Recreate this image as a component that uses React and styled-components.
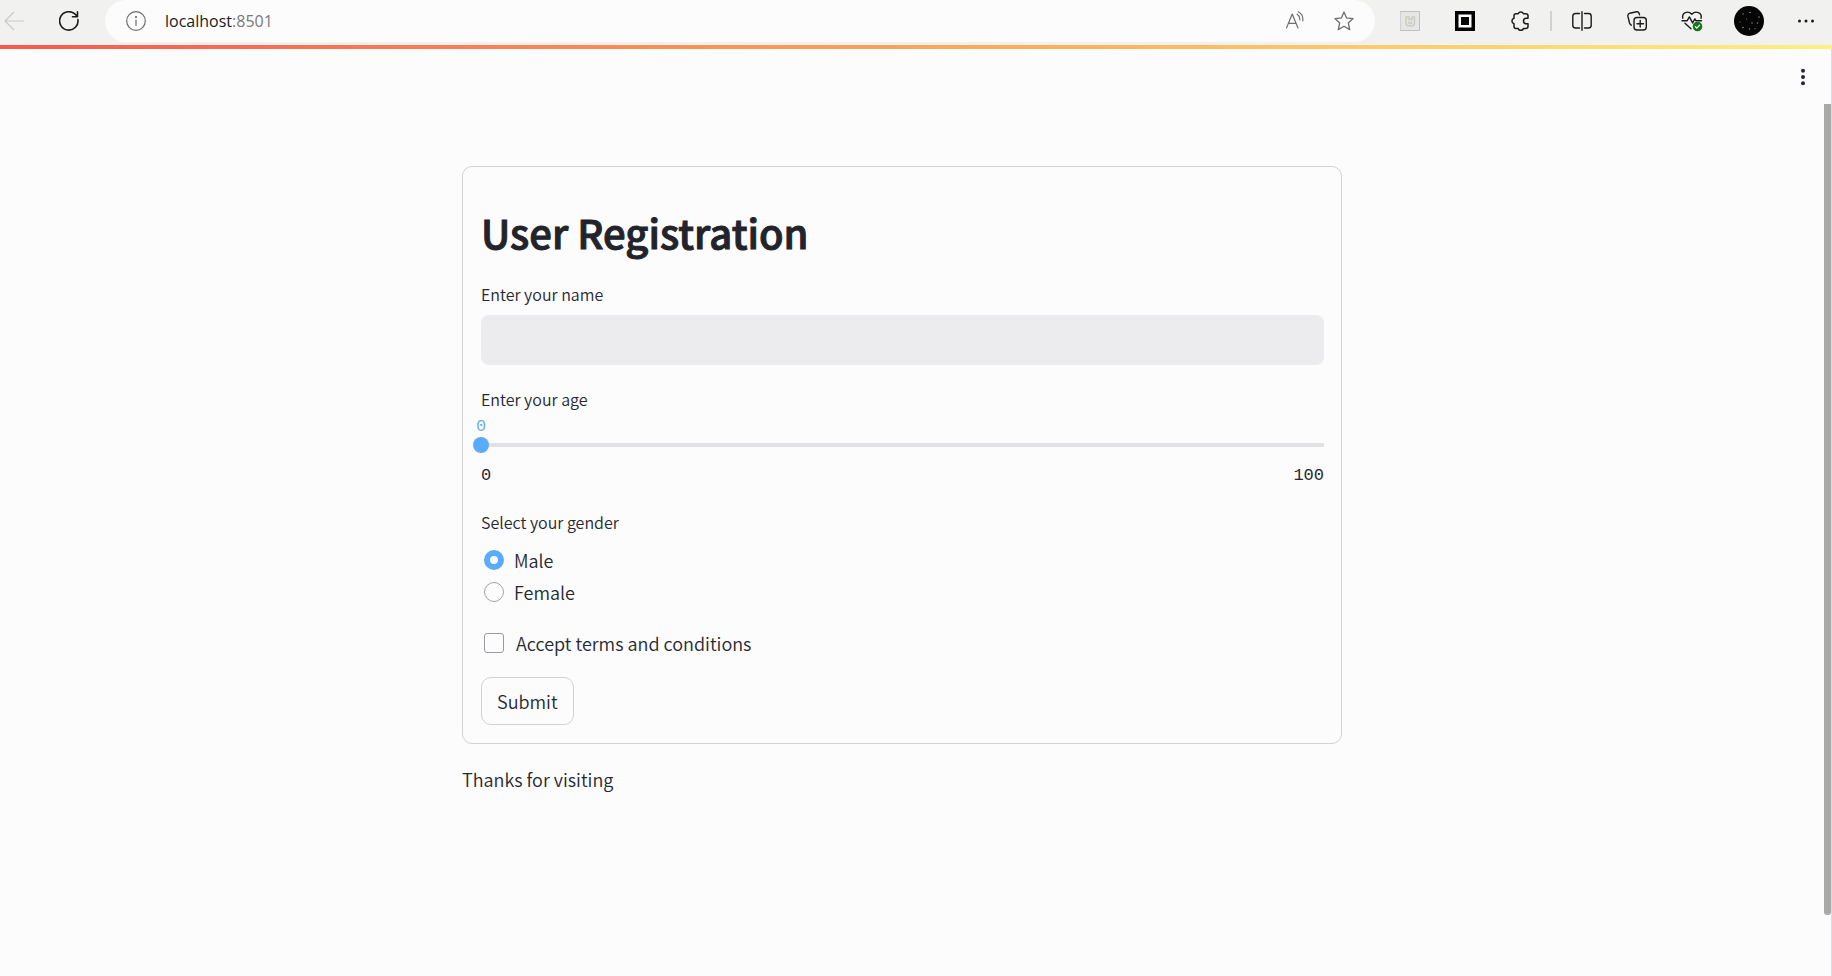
import React, { useState } from "react";
import styled, { createGlobalStyle } from "styled-components";

const sans = `"Noto Sans CJK SC", "Noto Sans", sans-serif`;
const mono = `"Liberation Mono", monospace`;
const ink = "#262730";
const accent = "#5aabfb";

const GlobalStyle = createGlobalStyle`
  *, *::before, *::after { box-sizing: border-box; }
  body { margin: 0; background: #fcfcfd; color: ${ink}; font-family: ${sans}; font-size: 18px; font-weight: 350; }
  button, input { font: inherit; color: inherit; }
`;

const Page = styled.div`
  display: flex;
  flex-direction: column;
  min-height: 100vh;
`;

const Toolbar = styled.header`
  display: flex;
  align-items: flex-start;
  height: 45px;
  padding-right: 10px;
  background: #f1f1f0;
  color: #1b1b1b;
`;

const IconButton = styled.button`
  display: flex;
  align-items: center;
  justify-content: center;
  flex: none;
  width: ${(p) => p.$width || 32}px;
  height: 42px;
  padding: 0;
  border: 0;
  background: none;
  color: ${(p) => p.$color || "inherit"};
`;

const NavGroup = styled.nav`
  display: flex;
  gap: 25px;
  padding-right: 20px;
`;

const AddressBar = styled.div`
  display: flex;
  flex: 1;
  align-items: center;
  height: 42px;
  padding: 0 15px;
  border-radius: 21px;
  background: #fcfcfd;
`;

const Address = styled.button`
  flex: 1;
  padding: 0 13px;
  border: 0;
  background: none;
  text-align: left;
  font-family: "Open Sans", "Noto Sans", sans-serif;
  font-size: 16px;
  font-weight: 400;
  line-height: 24px;
  color: #1b1b1b;
`;

const Port = styled.span`
  color: #7a7a7a;
`;

const AddressActions = styled.div`
  display: flex;
  gap: 17px;
`;

const ToolGroup = styled.div`
  display: flex;
  gap: ${(p) => p.$gap || 23}px;
  padding-left: ${(p) => p.$inset || 0}px;
`;

const Divider = styled.span`
  width: 2px;
  height: 20px;
  margin: 11px 14px 0;
  background: #d2d2d2;
`;

const LoadingBar = styled.div`
  height: 4px;
  background: linear-gradient(90deg, rgb(248, 88, 80), rgb(252, 180, 92) 60%, rgb(252, 240, 130));
`;

const Viewport = styled.div`
  display: flex;
  flex: 1;
`;

const Main = styled.main`
  flex: 1;
`;

const AppHeader = styled.div`
  display: flex;
  justify-content: flex-end;
  padding: 7px 5px 0 0;
`;

const ScrollRail = styled.div`
  display: flex;
  width: 8px;
  padding: 55px 0 61px;
  border-right: 1px solid #d9d9f2;
`;

const ScrollThumb = styled.div`
  flex: 1;
  border-radius: 0 0 3px 3px;
  background: #a9a9a6;
`;

const ColumnArea = styled.div`
  padding: 68px 20px 0 0;
`;

const Column = styled.div`
  width: 100%;
  max-width: 880px;
  margin: 0 auto;
`;

const Form = styled.form`
  display: flex;
  flex-direction: column;
  padding: 35px 17px 18px 18px;
  border: 1px solid #d3d3d6;
  border-radius: 10px;
`;

const Title = styled.h1`
  margin: 0 0 20px;
  font-size: 40px;
  font-weight: 500;
  line-height: 60px;
  color: #22232b;
  -webkit-text-stroke: 1px currentColor;
`;

const Field = styled.div`
  display: flex;
  flex-direction: column;
  margin-bottom: 22px;
`;

const FieldGroup = styled.fieldset`
  min-width: 0;
  margin: 0 0 19px;
  padding: 0;
  border: 0;
`;

const labelText = `
  padding: 0;
  font-size: 16px;
  line-height: 24px;
`;

const Label = styled.label`${labelText}`;
const Legend = styled.legend`${labelText}`;

const TextInput = styled.input`
  width: 100%;
  height: 50px;
  margin-top: 9px;
  padding: 0 16px;
  border: 0;
  border-radius: 8px;
  background: #ececee;
`;

const SliderValue = styled.output`
  align-self: flex-start;
  margin-top: 6px;
  position: relative;
  transform: translateX(-50%);
  font-family: ${mono};
  font-size: 17px;
  line-height: 20px;
  color: #6fb2e0;
`;

const Slider = styled.input`
  appearance: none;
  width: calc(100% + 16px);
  height: 16px;
  margin: 0 -8px;
  background: linear-gradient(#e2e2e4, #e2e2e4) center / calc(100% - 16px) 4px no-repeat;

  &::-webkit-slider-thumb {
    appearance: none;
    width: 16px;
    height: 16px;
    border-radius: 50%;
    background: ${accent};
  }
`;

const SliderScale = styled.div`
  display: flex;
  justify-content: space-between;
  padding: 13px 0 2px;
  font-family: ${mono};
  font-size: 17px;
  line-height: 20px;
`;

const Options = styled.div`
  display: flex;
  flex-direction: column;
  padding-top: 10px;
`;

const Choice = styled.label`
  display: flex;
  align-items: center;
  gap: ${(p) => p.$gap || 10}px;
  padding-left: 3px;
  line-height: 32px;
`;

const Radio = styled.input`
  appearance: none;
  width: 20px;
  height: 20px;
  margin: 0;
  border: 1px solid #a5a5a0;
  border-radius: 50%;

  &:checked {
    border: 6px solid ${accent};
  }
`;

const Checkbox = styled.input`
  appearance: none;
  width: 20px;
  height: 20px;
  margin: 0;
  border: 1px solid #9a9aa6;
  border-radius: 3px;

  &:checked {
    background: ${accent};
  }
`;

const Submit = styled.button`
  align-self: flex-start;
  margin-top: 18px;
  padding: 0 15px;
  border: 1px solid #d0d0d6;
  border-radius: 10px;
  background: transparent;
  line-height: 46px;
`;

const Footnote = styled.p`
  margin: 20px 0 0;
  line-height: 30px;
`;

function Icon({ size = 20, children, stroke = 1.4 }) {
  return (
    <svg
      width={size}
      height={size}
      viewBox={`0 0 ${size} ${size}`}
      fill="none"
      stroke="currentColor"
      strokeWidth={stroke}
      strokeLinecap="round"
      strokeLinejoin="round"
      aria-hidden="true"
    >
      {children}
    </svg>
  );
}

const BackIcon = () => (
  <Icon stroke={1.2}>
    <path d="M19.5 10H1M9.500 1.500L1 10l8.500 8.500" />
  </Icon>
);

const ReloadIcon = () => (
  <Icon stroke={1.6}>
    <path d="M18.900 8.500A9.200 9.200 0 1 1 15.500 2.700L18.500 5.500M18.500 0.800v5h-5" />
  </Icon>
);

const InfoIcon = () => (
  <Icon stroke={1.2}>
    <circle cx="10" cy="10" r="9.300" />
    <path d="M10 9v5.500" />
    <circle cx="10" cy="6" r="0.500" fill="currentColor" />
  </Icon>
);

const ReadAloudIcon = () => (
  <Icon stroke={1.2}>
    <path d="M1.500 17L7.200 3L13 17M3.500 12.300h7.500" />
    <path d="M12.200 3.200a6 6 0 0 1 2.600 5.600M13.200 0.800a8.500 8.500 0 0 1 4.500 9" />
  </Icon>
);

const StarIcon = () => (
  <Icon stroke={1.3}>
    <path d="M10 1l2.600 5.900 6.500.7-4.800 4.400 1.400 6.600L10 15.300l-5.700 3.300 1.400-6.600L.9 7.600l6.500-.7z" />
  </Icon>
);

const FadedExtensionIcon = () => (
  <Icon stroke={1}>
    <rect x="0.500" y="0.500" width="19" height="19" fill="#e6e6e2" stroke="#bfbfc8" />
    <path d="M6 6v6q0 3 3.500 3h1.500q3.500 0 3.500-3V6h-2.500v2.500h-3V6zM9 11v1.500h2.500V11" stroke="#cbcbc6" strokeWidth="1.500" />
  </Icon>
);

const SquareExtensionIcon = () => (
  <Icon>
    <rect x="0" y="0" width="20" height="20" fill="#000" stroke="none" />
    <rect x="3.500" y="3.500" width="13" height="13" fill="#fff" stroke="none" />
    <rect x="6" y="6" width="8" height="8" fill="#000" stroke="none" />
  </Icon>
);

const PuzzleIcon = () => (
  <Icon stroke={1.5}>
    <path d="M4 4.700q0-2 2-2h2.200a2.800 2.800 0 0 1 5.200 0h2.300q2.300 0 2.300 2v2.500h-1.700a2.800 2.800 0 0 0 0 5.600H18v2.800q0 2-2.300 2h-2.300a2.800 2.800 0 0 1-5.200 0H6q-2 0-2-2v-2.900a2.800 2.800 0 0 1 0-5.400z" />
  </Icon>
);

const SplitIcon = () => (
  <Icon>
    <path d="M7.500 2.500h-4Q.8 2.500.8 5.200v9.100q0 2.700 2.700 2.700h4M12.500 2.500h4q2.700 0 2.700 2.700v9.100q0 2.700-2.700 2.700h-4M10 .7v18.600" />
  </Icon>
);

const CollectionsIcon = () => (
  <Icon>
    <rect x="7" y="6.500" width="12.300" height="12.500" rx="3" />
    <path d="M13.200 9.500v6.500M10 12.700h6.500M4.300 14.200Q3 13.500 2.500 12L.9 5.200Q.5 3 2.800 2.200L9.500.8q2-.3 2.700 1.700l.3 1.200" />
  </Icon>
);

const HealthIcon = () => (
  <Icon size={22}>
    <path d="M1.800 8.200C.5 2.500 7 .2 10.800 4.200C14.500.2 21.500 2.500 20 8.200M1 10.700h5.200l2.200-3.800 3.200 6 2.300-4 1 1.800h5.600M4 13.200l6 5.500" />
    <circle cx="16.500" cy="16.500" r="4.800" fill="#13761b" stroke="none" />
    <path d="M14.300 16.700l1.500 1.500 2.800-3" stroke="#fff" strokeWidth="1.200" />
  </Icon>
);

const AvatarIcon = () => (
  <Icon size={30}>
    <circle cx="15" cy="15" r="15" fill="#050505" stroke="none" />
    <g fill="#8c8c80" stroke="none">
      <circle cx="9" cy="8" r="0.700" />
      <circle cx="16" cy="6.500" r="0.800" />
      <circle cx="25" cy="11" r="0.800" />
      <circle cx="6" cy="16" r="0.600" />
      <circle cx="12.500" cy="13" r="0.600" />
      <circle cx="18" cy="17" r="0.700" />
      <circle cx="23.500" cy="17" r="0.700" />
      <circle cx="9" cy="21.500" r="0.800" />
      <circle cx="15.500" cy="23" r="0.700" />
      <circle cx="21" cy="22.500" r="0.600" />
    </g>
  </Icon>
);

const MoreIcon = () => (
  <Icon>
    <g fill="currentColor" stroke="none">
      <circle cx="3.500" cy="10" r="1.500" />
      <circle cx="10" cy="10" r="1.500" />
      <circle cx="16.500" cy="10" r="1.500" />
    </g>
  </Icon>
);

const KebabIcon = () => (
  <Icon>
    <g fill="currentColor" stroke="none">
      <circle cx="10" cy="3.700" r="2" />
      <circle cx="10" cy="10" r="2" />
      <circle cx="10" cy="16.300" r="2" />
    </g>
  </Icon>
);

function BrowserToolbar() {
  return (
    <Toolbar>
      <NavGroup>
        <IconButton type="button" $width={28} $color="#c9c9c6" aria-label="Back">
          <BackIcon />
        </IconButton>
        <IconButton type="button" aria-label="Refresh">
          <ReloadIcon />
        </IconButton>
      </NavGroup>
      <AddressBar>
        <IconButton type="button" $color="#6e6e6e" aria-label="Site information">
          <InfoIcon />
        </IconButton>
        <Address type="button">
          localhost<Port>:8501</Port>
        </Address>
        <AddressActions>
          <IconButton type="button" $color="#6e6e6e" aria-label="Read aloud">
            <ReadAloudIcon />
          </IconButton>
          <IconButton type="button" $color="#6e6e6e" aria-label="Add to favorites">
            <StarIcon />
          </IconButton>
        </AddressActions>
      </AddressBar>
      <ToolGroup $inset={19}>
        <IconButton type="button" aria-label="Disabled extension">
          <FadedExtensionIcon />
        </IconButton>
        <IconButton type="button" aria-label="Extension">
          <SquareExtensionIcon />
        </IconButton>
        <IconButton type="button" aria-label="Extensions">
          <PuzzleIcon />
        </IconButton>
      </ToolGroup>
      <Divider />
      <ToolGroup>
        <IconButton type="button" aria-label="Split screen">
          <SplitIcon />
        </IconButton>
        <IconButton type="button" aria-label="Collections">
          <CollectionsIcon />
        </IconButton>
        <IconButton type="button" aria-label="Browser essentials">
          <HealthIcon />
        </IconButton>
      </ToolGroup>
      <ToolGroup $inset={25} $gap={25}>
        <IconButton type="button" aria-label="Profile">
          <AvatarIcon />
        </IconButton>
        <IconButton type="button" aria-label="Settings and more">
          <MoreIcon />
        </IconButton>
      </ToolGroup>
    </Toolbar>
  );
}

function RegistrationForm() {
  const [age, setAge] = useState(0);
  return (
    <Form onSubmit={(e) => e.preventDefault()}>
      <Title>User Registration</Title>
      <Field>
        <Label htmlFor="name">Enter your name</Label>
        <TextInput id="name" type="text" />
      </Field>
      <Field>
        <Label htmlFor="age">Enter your age</Label>
        <SliderValue htmlFor="age" style={{ left: `${age}%` }}>
          {age}
        </SliderValue>
        <Slider id="age" type="range" min="0" max="100" value={age} onChange={(e) => setAge(Number(e.target.value))} />
        <SliderScale>
          <span>0</span>
          <span>100</span>
        </SliderScale>
      </Field>
      <FieldGroup>
        <Legend>Select your gender</Legend>
        <Options>
          <Choice>
            <Radio type="radio" name="gender" defaultChecked />
            Male
          </Choice>
          <Choice>
            <Radio type="radio" name="gender" />
            Female
          </Choice>
        </Options>
      </FieldGroup>
      <Choice $gap={12}>
        <Checkbox type="checkbox" />
        Accept terms and conditions
      </Choice>
      <Submit type="submit">Submit</Submit>
    </Form>
  );
}

export default function App() {
  return (
    <Page>
      <GlobalStyle />
      <BrowserToolbar />
      <LoadingBar />
      <Viewport>
        <Main>
          <AppHeader>
            <IconButton type="button" aria-label="Main menu">
              <KebabIcon />
            </IconButton>
          </AppHeader>
          <ColumnArea>
            <Column>
              <RegistrationForm />
              <Footnote>Thanks for visiting</Footnote>
            </Column>
          </ColumnArea>
        </Main>
        <ScrollRail>
          <ScrollThumb />
        </ScrollRail>
      </Viewport>
    </Page>
  );
}
